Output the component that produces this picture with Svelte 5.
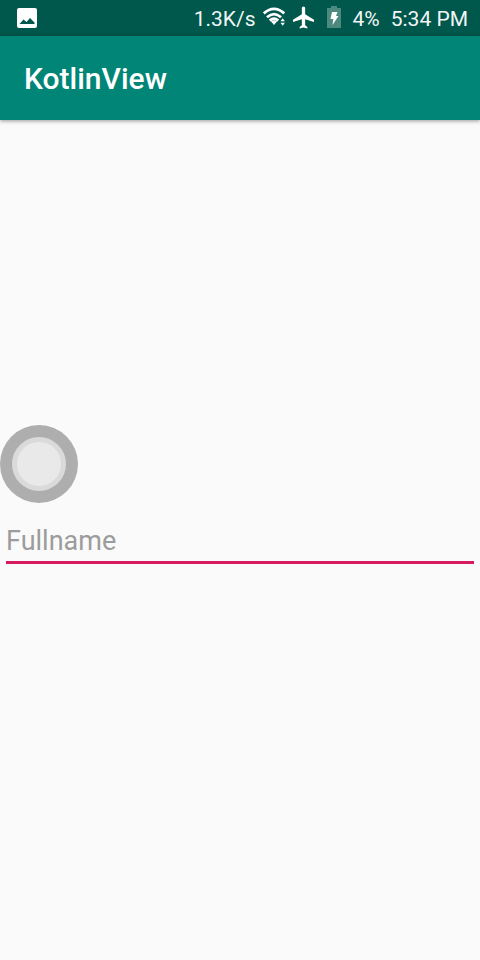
<script>
  let fullname = $state('');
</script>

<div class="screen">
  <div class="status">
    <svg class="picture" viewBox="0 0 20 20" aria-hidden="true">
      <path fill="#fff" fill-rule="evenodd" d="M2 0h16a2 2 0 0 1 2 2v16a2 2 0 0 1-2 2H2a2 2 0 0 1-2-2V2a2 2 0 0 1 2-2zM2.500 16h15v-1.500l-4.500-4.500-3.500 4-3-2.500z" />
    </svg>
    <span class="speed">1.3K/s</span>
    <svg class="wifi" viewBox="0 0 24 20" aria-hidden="true">
      <g fill="none" stroke="#fff" stroke-width="2.800">
        <path d="M.8 6.400Q11 -2.600 21.200 6.400" />
        <path d="M4 10.300Q11 4 18 10.300" />
        <path d="M6.800 13.600Q11 9.800 15.200 13.600" />
      </g>
      <path fill="#fff" d="M8 14.500Q11 12.200 14 14.500L11 18zM17.500 14.200l2.200-3 2.200 3zM17.500 15.800h4.400l-2.200 3z" />
    </svg>
    <svg class="plane" viewBox="2 2 19 20" aria-hidden="true">
      <path fill="#fff" d="M21 16v-2l-8-5V3.500c0-.83-.67-1.500-1.500-1.500S10 2.670 10 3.500V9l-8 5v2l8-2.500V19l-2 1.500V22l3.500-1 3.500 1v-1.500L13 19v-5.500z" />
    </svg>
    <svg class="battery" viewBox="0 0 14 22" aria-hidden="true">
      <path fill="#4d897f" d="M4 0h6v2h4v20H0V2h4z" />
      <path fill="#fff" d="M5 6h5.500l-1.500 4h2.500L5.500 19 6.300 13H3.500z" />
    </svg>
    <span class="level">4%</span>
    <span>5:34 PM</span>
  </div>
  <header><h1>KotlinView</h1></header>
  <main>
    <input type="text" aria-label="Fullname" placeholder="Fullname" bind:value={fullname} />
  </main>
  <button class="assist" type="button" aria-label="Quick menu"><span></span></button>
</div>

<style>
  :global(body) {
    background: #fafafa;
  }
  .screen {
    position: relative;
    display: flex;
    flex-direction: column;
    min-height: 100vh;
    background: #fafafa;
    font-family: Roboto, sans-serif;
  }
  .status {
    display: flex;
    align-items: center;
    height: 36px;
    padding: 0 12px 0 17px;
    background: #00574b;
    color: #fff;
    font-size: 21px;
    line-height: 36px;
    white-space: nowrap;
  }
  .status span {
    padding-top: 2px;
    opacity: 0.95;
  }
  .status svg {
    flex: none;
  }
  .picture {
    width: 20px;
    height: 20px;
  }
  .speed {
    margin-left: auto;
  }
  .wifi {
    width: 24px;
    height: 20px;
    margin: 0 6px 2px 7px;
  }
  .plane {
    width: 21px;
    height: 23px;
    margin-bottom: 2px;
  }
  .battery {
    width: 14px;
    height: 22px;
    margin: 0 12px 2px 13px;
  }
  .level {
    margin-right: 11px;
  }
  header {
    display: flex;
    align-items: center;
    box-sizing: border-box;
    height: 84px;
    padding: 2px 24px 0;
    background: #008577;
    box-shadow: 0 1px 4px rgba(0, 0, 0, 0.4);
  }
  h1 {
    margin: 0;
    color: #fff;
    font-size: 30px;
    font-weight: 500;
    line-height: 36px;
  }
  main {
    display: flex;
    flex: 1;
    align-items: center;
    padding: 0 6px;
  }
  input {
    box-sizing: border-box;
    flex: 1;
    min-width: 0;
    height: 48px;
    padding: 4px 0 0;
    border: 0;
    border-bottom: 3px solid #d81b60;
    border-radius: 0;
    outline: 0;
    background: none;
    color: #212121;
    font: 27px/36px Roboto, sans-serif;
  }
  input::placeholder {
    color: #9c9c9c;
    opacity: 1;
  }
  .assist {
    position: absolute;
    top: 425px;
    left: 0;
    display: grid;
    place-items: center;
    width: 78px;
    height: 78px;
    padding: 0;
    border: 0;
    border-radius: 50%;
    background: #aeaeae;
  }
  .assist span {
    box-sizing: border-box;
    width: 54px;
    height: 54px;
    border: 5px solid #dadada;
    border-radius: 50%;
    background: #e9e9e9;
  }
</style>
